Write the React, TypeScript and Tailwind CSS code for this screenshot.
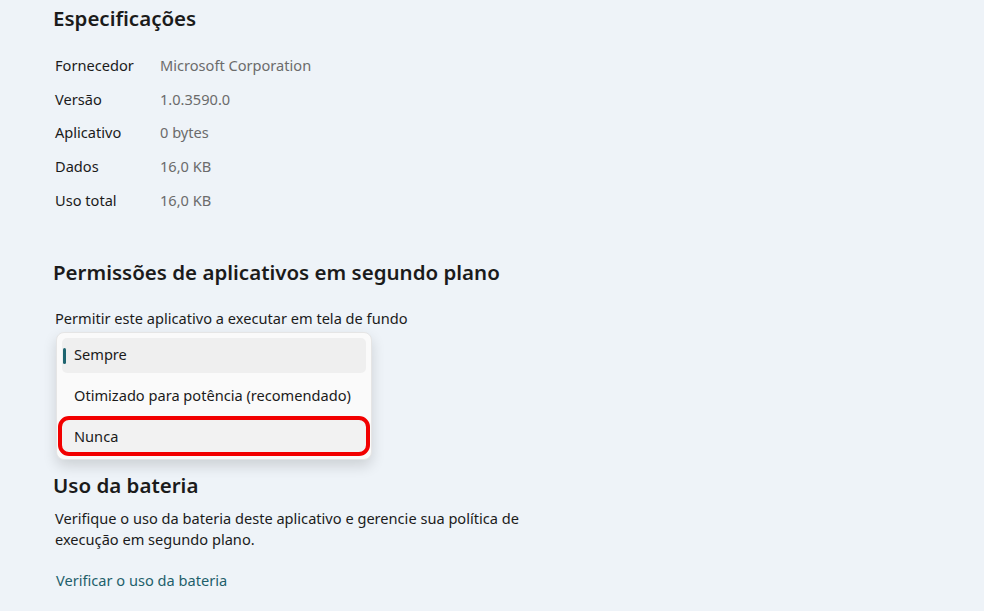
const specs = [
  { label: "Fornecedor", value: "Microsoft Corporation" },
  { label: "Versão", value: "1.0.3590.0" },
  { label: "Aplicativo", value: "0 bytes" },
  { label: "Dados", value: "16,0 KB" },
  { label: "Uso total", value: "16,0 KB" },
];

const font = { fontFamily: '"Noto Sans", "Open Sans", sans-serif' };

export default function App() {
  return (
    <div className="h-[611px] w-[984px] overflow-hidden bg-[#eef3f8] text-[#1b1b1b]" style={font}>
      <div className="pl-[53px] pt-[3px]">
        {/* Especificações */}
        <h2 className="text-[20.5px] font-semibold leading-[30px]">Especificações</h2>
        <div className="mt-[16px] flex flex-col pl-[2px]">
          {specs.map((s) => (
            <div key={s.label} className="flex h-[33.75px] items-center text-[14.6px]">
              <span className="w-[105px]">{s.label}</span>
              <span className="text-[#6b6b6b]">{s.value}</span>
            </div>
          ))}
        </div>

        {/* Permissões */}
        <h2 className="mt-[39px] text-[20.5px] font-semibold leading-[30px]">
          Permissões de aplicativos em segundo plano
        </h2>
        <p className="mt-[21px] pl-[2px] text-[14.6px] leading-[20px]">
          Permitir este aplicativo a executar em tela de fundo
        </p>

        <div className="relative mt-[4px] ml-[3px] h-[128px] w-[316px]">
          <div className="absolute inset-0 rounded-[8px] border border-[#e5e5e5] bg-[#fafafa] px-[5px] pt-[5px] shadow-[0_6px_14px_rgba(0,0,0,0.14)]">
            <div className="flex flex-col gap-[6px]">
              <div className="relative flex h-[35px] items-center rounded-[5px] bg-[#efefef] pl-[12px] text-[14.6px]">
                <span className="absolute left-[1px] top-[10px] h-[16px] w-[3px] rounded-full bg-[#1f6570]" />
                Sempre
              </div>
              <div className="flex h-[35px] items-center rounded-[5px] pl-[12px] text-[14.6px]">
                Otimizado para potência (recomendado)
              </div>
              <div className="flex h-[35px] items-center rounded-[5px] bg-[#f2f2f2] pl-[12px] text-[14.6px]">
                Nunca
              </div>
            </div>
          </div>
          <div className="absolute left-[2px] top-[84px] h-[40px] w-[312px] rounded-[11px] border-4 border-[#f20000]" />
        </div>

        {/* Uso da bateria */}
        <h2 className="mt-[10px] text-[20.5px] font-semibold leading-[30px]">Uso da bateria</h2>
        <p className="mt-[8px] w-[480px] pl-[2px] text-[14.6px] leading-[21px]">
          Verifique o uso da bateria deste aplicativo e gerencie sua política de execução em segundo plano.
        </p>
        <a className="mt-[20px] block pl-[3px] text-[14.6px] leading-[20px] text-[#1e5f6b]">
          Verificar o uso da bateria
        </a>
      </div>
    </div>
  );
}
